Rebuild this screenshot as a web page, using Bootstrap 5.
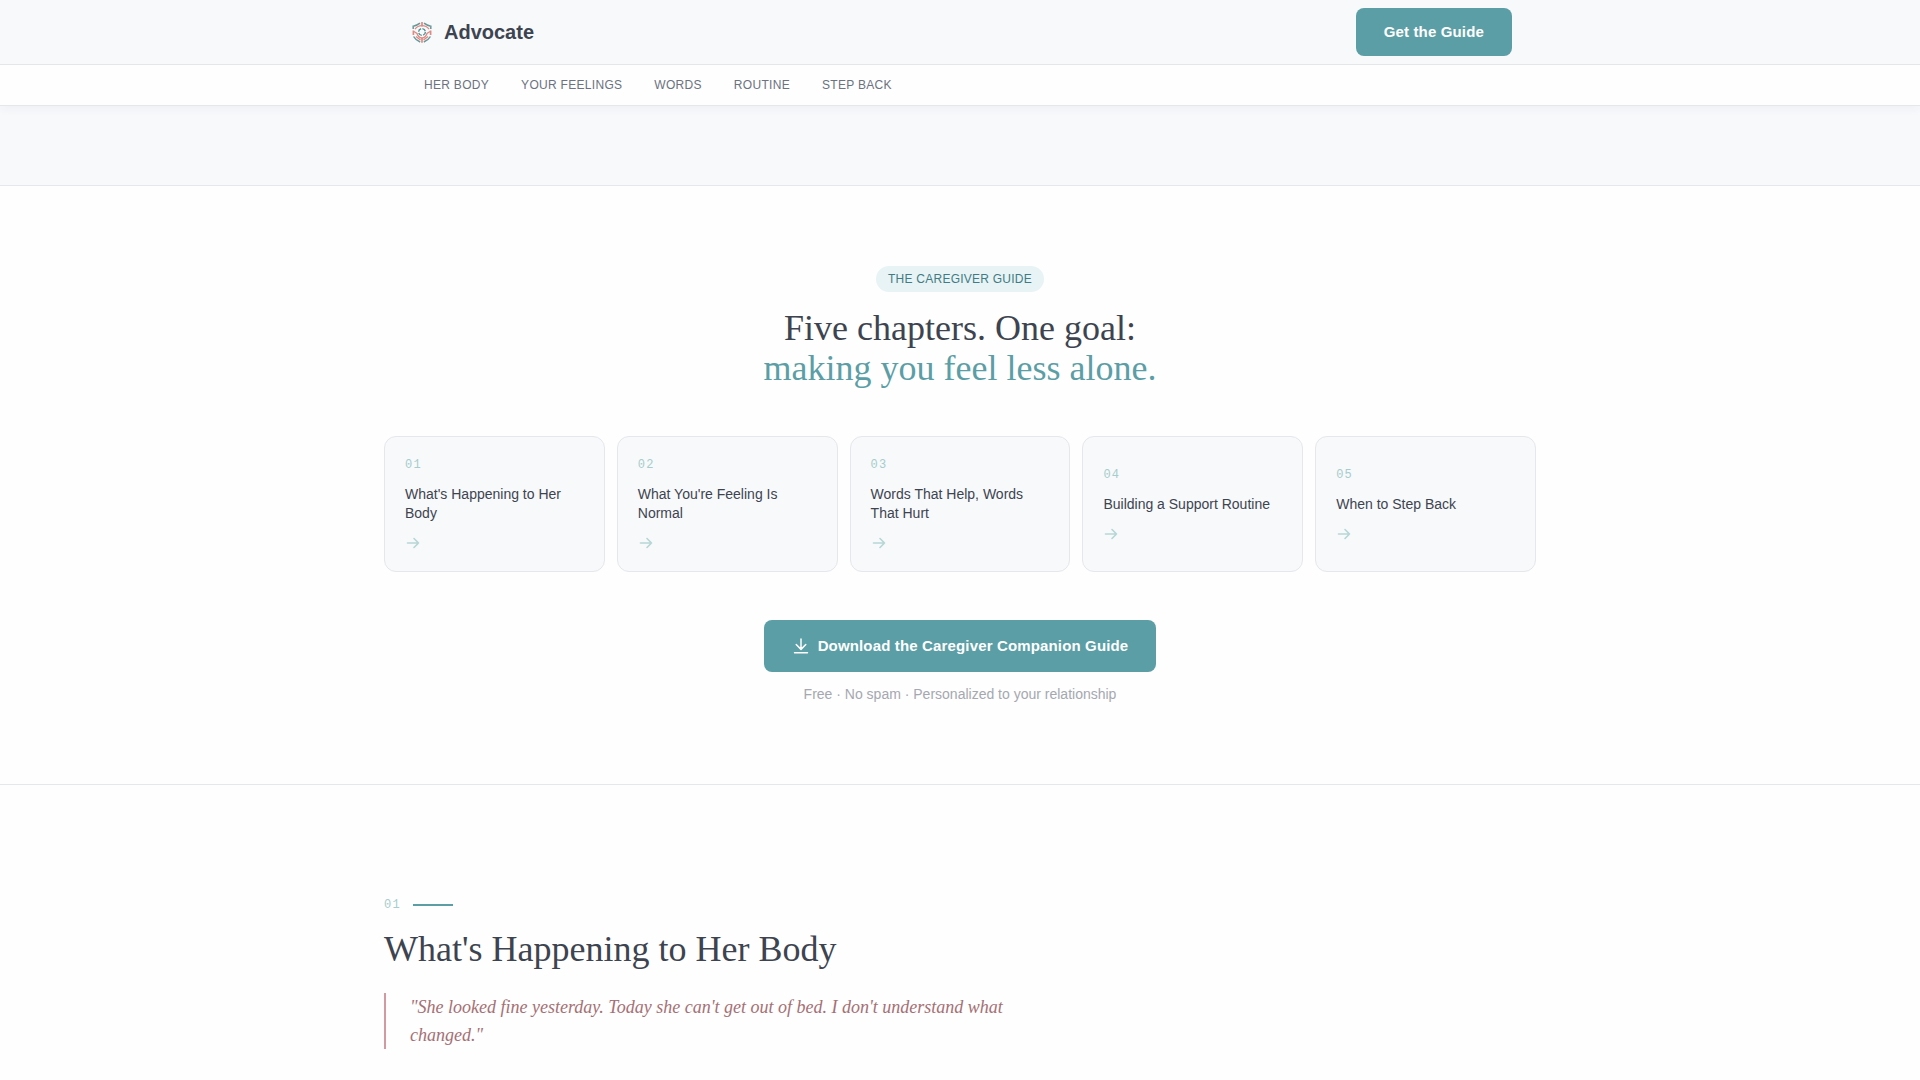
<!DOCTYPE html>
<html lang="en">
<head>
<meta charset="utf-8">
<meta name="viewport" content="width=device-width, initial-scale=1">
<title>Advocate – The Caregiver Guide</title>
<link href="https://cdn.jsdelivr.net/npm/bootstrap@5.3.0/dist/css/bootstrap.min.css" rel="stylesheet">
<style>
  :root { --teal: #5b9ea6; --teal-soft: #a6cdcc; --ink: #3d4450; --muted: #6b7280; --faint: #a5a8b0; --line: #e5e7eb; --mist: #f8f9fb; --rose: #a57075; }
  body { font-family: "Liberation Sans", Arial, sans-serif; color: var(--ink); background: #fefefe; }
  .wrap { max-width: 1152px; margin-inline: auto; }
  .site-top { background: var(--mist); border-bottom: 1px solid var(--line); }
  .site-top .wrap { min-height: 64px; }
  .brand { font-size: 20px; line-height: 28px; font-weight: 700; color: var(--ink); }
  .btn-teal { --bs-btn-color: #fff; --bs-btn-bg: var(--teal); --bs-btn-hover-color: #fff; --bs-btn-hover-bg: #4b8b93; --bs-btn-active-color: #fff; --bs-btn-active-bg: #437e86;
    --bs-btn-border-width: 0; --bs-btn-border-radius: 8px; --bs-btn-padding-x: 28px; --bs-btn-padding-y: 12px; --bs-btn-font-size: 15px; --bs-btn-line-height: 24px; --bs-btn-font-weight: 700; letter-spacing: .01em; }
  .btn-tall { --bs-btn-padding-y: 14px; }
  .chapter-bar { background: #fefefe; border-bottom: 1px solid var(--line); box-shadow: 0 4px 8px rgba(60, 60, 110, .04); position: relative; }
  .chapter-bar .nav { --bs-nav-link-color: var(--muted); --bs-nav-link-hover-color: var(--teal); --bs-nav-link-padding-x: 16px; --bs-nav-link-padding-y: 12px; padding-left: 24px; }
  .chapter-bar .nav-link { font-size: 12px; line-height: 16px; text-transform: uppercase; letter-spacing: .025em; }
  .intro-strip { background: var(--mist); border-bottom: 1px solid var(--line); height: 80px; }
  .guide { padding-block: 80px; border-bottom: 1px solid var(--line); }
  .pill { background: #e8f3f5; color: #3f7c84; font-size: 12px; line-height: 18px; padding: 4px 12px; margin-bottom: 16px; letter-spacing: .02em; }
  .title-serif { font-family: "Liberation Serif", "Times New Roman", serif; font-size: 36px; line-height: 40px; font-weight: 400; color: var(--ink); }
  .title-serif span { color: var(--teal); }
  .chapters { margin-block: 48px; --bs-gutter-x: 12px; }
  .chapter { background: var(--mist); border: 1px solid var(--line); border-radius: 12px; padding: 20px; gap: 12px; color: var(--ink); font-size: 14px; line-height: 19px; }
  .num { font-family: "Liberation Mono", "Courier New", monospace; font-size: 12px; line-height: 16px; letter-spacing: .1em; color: var(--teal-soft); }
  .chapter svg { color: #b7d6d6; }
  .fine { color: var(--faint); font-size: 14px; line-height: 20px; margin-top: 12px; }
  .story { padding: 112px 0 24px; }
  .dash { width: 40px; height: 2px; background: var(--teal); }
  .voice { font-family: "Liberation Serif", "Times New Roman", serif; font-style: italic; font-size: 18px; line-height: 28px; color: var(--rose); border-left: 2px solid #d09aa2; padding-left: 24px; max-width: 672px; }
</style>
<script defer src="https://cdn.jsdelivr.net/npm/bootstrap@5.3.0/dist/js/bootstrap.bundle.min.js"></script>
</head>
<body>
<svg class="d-none" aria-hidden="true">
  <symbol id="arrow" viewBox="0 0 256 256"><path d="M40 128H216M144 56l72 72-72 72" fill="none" stroke="currentColor" stroke-width="26" stroke-linecap="round" stroke-linejoin="round"/></symbol>
</svg>

<header class="site-top">
  <div class="wrap d-flex align-items-center justify-content-between px-4">
    <a class="brand d-flex align-items-center gap-2 text-decoration-none" href="#">
      <svg width="28" height="28" viewBox="0 0 28 28" fill="none" stroke-linecap="butt" aria-hidden="true">
        <path d="M5.2 11V8.2Q9 7.6 12 5.2M22.8 11V8.2Q19 7.6 16 5.2" stroke="#67999a" stroke-width="1.5"/>
        <path d="M5.6 18.5Q7.5 22 12.2 24M22.4 18.5Q20.5 22 15.8 24" stroke="#67999a" stroke-width="1.5"/>
        <path d="M14 4V8.5M14 19.5V24.8M5.4 12.5V17M22.6 12.5V17" stroke="#dd8a83" stroke-width="1.7"/>
        <path d="M7 11.2Q9.5 7.6 14 7.6Q18.5 7.6 21 11.2M6 13.5L9 15.5Q10 19.2 14 20.2Q18 19.2 19 15.5L22 13.5M8 18.5L12.5 22M20 18.5L15.500 22" stroke="#dd8a83" stroke-width="1.3"/>
        <circle cx="14" cy="14" r="3.4" fill="#f8fbfb" stroke="#579396" stroke-width="1.4" stroke-dasharray="4 1.34"/>
      </svg>
      Advocate
    </a>
    <button class="btn btn-teal" type="button">Get the Guide</button>
  </div>
</header>

<div class="chapter-bar">
  <div class="wrap">
    <nav class="nav" aria-label="Chapters">
      <a class="nav-link" href="#her-body">Her Body</a>
      <a class="nav-link" href="#">Your Feelings</a>
      <a class="nav-link" href="#">Words</a>
      <a class="nav-link" href="#">Routine</a>
      <a class="nav-link" href="#">Step Back</a>
    </nav>
  </div>
</div>
<div class="intro-strip"></div>

<main>
  <section class="guide">
    <div class="wrap text-center">
      <div class="d-flex justify-content-center"><span class="pill rounded-pill">THE CAREGIVER GUIDE</span></div>
      <h1 class="title-serif mb-0">Five chapters. One goal:<br><span>making you feel less alone.</span></h1>
      <div class="chapters row row-cols-1 row-cols-md-5 text-start">
        <div class="col"><a class="chapter h-100 d-flex flex-column justify-content-center text-decoration-none" href="#her-body"><span class="num">01</span><span>What's Happening to Her Body</span><svg width="16" height="16" aria-hidden="true"><use href="#arrow"/></svg></a></div>
        <div class="col"><a class="chapter h-100 d-flex flex-column justify-content-center text-decoration-none" href="#"><span class="num">02</span><span>What You're Feeling Is Normal</span><svg width="16" height="16" aria-hidden="true"><use href="#arrow"/></svg></a></div>
        <div class="col"><a class="chapter h-100 d-flex flex-column justify-content-center text-decoration-none" href="#"><span class="num">03</span><span>Words That Help, Words That Hurt</span><svg width="16" height="16" aria-hidden="true"><use href="#arrow"/></svg></a></div>
        <div class="col"><a class="chapter h-100 d-flex flex-column justify-content-center text-decoration-none" href="#"><span class="num">04</span><span>Building a Support Routine</span><svg width="16" height="16" aria-hidden="true"><use href="#arrow"/></svg></a></div>
        <div class="col"><a class="chapter h-100 d-flex flex-column justify-content-center text-decoration-none" href="#"><span class="num">05</span><span>When to Step Back</span><svg width="16" height="16" aria-hidden="true"><use href="#arrow"/></svg></a></div>
      </div>
      <button class="btn btn-teal btn-tall d-inline-flex align-items-center gap-2 align-top" type="button">
        <svg width="18" height="18" viewBox="0 0 256 256" fill="none" stroke="currentColor" stroke-width="21" stroke-linecap="round" stroke-linejoin="round" aria-hidden="true"><path d="M128 30V176M60 108l68 68 68-68M36 224H220"/></svg>
        Download the Caregiver Companion Guide
      </button>
      <p class="fine mb-0">Free · No spam · Personalized to your relationship</p>
    </div>
  </section>

  <section class="story" id="her-body">
    <div class="wrap">
      <div class="d-flex align-items-center mb-3 gap-2"><span class="num pe-1">01</span><span class="dash"></span></div>
      <h2 class="title-serif mb-4">What's Happening to Her Body</h2>
      <blockquote class="voice mb-0">"She looked fine yesterday. Today she can't get out of bed. I don't understand what changed."</blockquote>
    </div>
  </section>
</main>
</body>
</html>
